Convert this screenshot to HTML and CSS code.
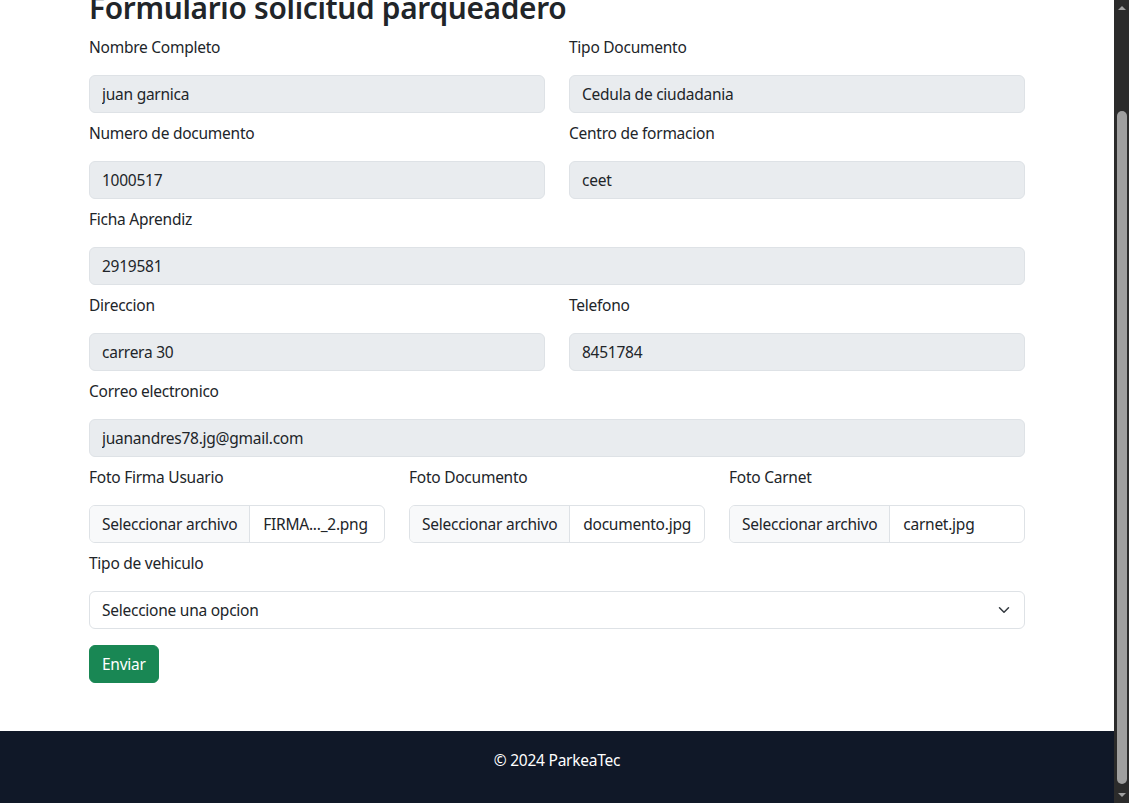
FILE: index.html
```html
<!DOCTYPE html>
<html lang="es">
<head>
<meta charset="utf-8">
<title>Formulario solicitud parqueadero</title>
<link rel="stylesheet" href="styles.css">
</head>
<body>
<div class="screen">
  <div class="page">
    <main class="container">
      <h2 class="title">Formulario solicitud parqueadero</h2>
      <form class="form">
        <div class="row row-2">
          <div class="field"><label class="label">Nombre Completo</label><input class="control" value="juan garnica" readonly></div>
          <div class="field"><label class="label">Tipo Documento</label><input class="control" value="Cedula de ciudadania" readonly></div>
        </div>
        <div class="row row-2">
          <div class="field"><label class="label">Numero de documento</label><input class="control" value="1000517" readonly></div>
          <div class="field"><label class="label">Centro de formacion</label><input class="control" value="ceet" readonly></div>
        </div>
        <div class="field"><label class="label">Ficha Aprendiz</label><input class="control" value="2919581" readonly></div>
        <div class="row row-2">
          <div class="field"><label class="label">Direccion</label><input class="control" value="carrera 30" readonly></div>
          <div class="field"><label class="label">Telefono</label><input class="control" value="8451784" readonly></div>
        </div>
        <div class="field"><label class="label">Correo electronico</label><input class="control" value="juanandres78.jg@gmail.com" readonly></div>
        <div class="row row-3">
          <div class="field"><label class="label">Foto Firma Usuario</label>
            <div class="file"><span class="file-btn">Seleccionar archivo</span><span class="file-name">FIRMA..._2.png</span></div>
          </div>
          <div class="field"><label class="label">Foto Documento</label>
            <div class="file"><span class="file-btn">Seleccionar archivo</span><span class="file-name">documento.jpg</span></div>
          </div>
          <div class="field"><label class="label">Foto Carnet</label>
            <div class="file"><span class="file-btn">Seleccionar archivo</span><span class="file-name">carnet.jpg</span></div>
          </div>
        </div>
        <div class="field field-last"><label class="label">Tipo de vehiculo</label>
          <div class="select"><span>Seleccione una opcion</span>
            <svg class="chevron" width="12" height="12" viewBox="0 0 16 16"><path d="M2 5l6 6 6-6" fill="none" stroke="#343a40" stroke-width="2" stroke-linecap="round" stroke-linejoin="round"/></svg>
          </div>
        </div>
        <button type="button" class="btn">Enviar</button>
      </form>
    </main>
    <footer class="footer">© 2024 ParkeaTec</footer>
  </div>
  <div class="scrollbar">
    <span class="arrow arrow-up"></span>
    <div class="track"><div class="thumb"></div></div>
    <span class="arrow arrow-down"></span>
  </div>
</div>
</body>
</html>
```

FILE: styles.css
```css
* { box-sizing: border-box; }
html, body { margin: 0; padding: 0; }
body {
  font-family: "Segoe UI", "Noto Sans", "Liberation Sans", sans-serif;
  font-size: 15.5px;
  letter-spacing: -0.25px;
  line-height: 24px;
  color: #212529;
  background: #fff;
  overflow: hidden;
}
.screen {
  display: flex;
  height: 803px;
  width: 1129px;
}
.page {
  flex: 1;
  height: 803px;
  overflow: hidden;
  display: flex;
  flex-direction: column;
  justify-content: flex-end;
}
.container {
  width: 960px;
  margin: 0 auto;
  padding: 0 12px 48px;
  flex-shrink: 0;
}
.title {
  font-size: 29.8px;
  letter-spacing: -0.3px;
  font-weight: 600;
  line-height: 38px;
  margin: 0 0 8px;
}
.form { display: flex; flex-direction: column; }
.row { display: grid; column-gap: 24px; }
.row-2 { grid-template-columns: 1fr 1fr; }
.row-3 { grid-template-columns: 1fr 1fr 1fr; }
.field {
  display: flex;
  flex-direction: column;
  gap: 16px;
  margin-bottom: 8px;
}
.field-last { margin-bottom: 16px; }
.label { display: block; height: 24px; }
.control {
  display: block;
  width: 100%;
  height: 38px;
  padding: 6px 12px;
  font: inherit;
  letter-spacing: inherit;
  color: #212529;
  background: #e9ecef;
  border: 1px solid #dee2e6;
  border-radius: 6px;
  outline: none;
}
.file {
  display: flex;
  align-items: center;
  height: 38px;
  border: 1px solid #dee2e6;
  border-radius: 6px;
  overflow: hidden;
  background: #fff;
}
.file-btn {
  height: 100%;
  display: flex;
  align-items: center;
  padding: 0 12px;
  background: #f8f9fa;
  border-right: 1px solid #dee2e6;
  white-space: nowrap;
}
.file-name { padding-left: 13px; white-space: nowrap; }
.select {
  display: flex;
  align-items: center;
  justify-content: space-between;
  height: 38px;
  padding: 0 12px;
  border: 1px solid #dee2e6;
  border-radius: 6px;
  background: #fff;
}
.chevron { display: block; margin-right: 2px; }
.btn {
  align-self: flex-start;
  height: 38px;
  padding: 0 12px;
  font: inherit;
  letter-spacing: inherit;
  color: #fff;
  background: #198754;
  border: 1px solid #198754;
  border-radius: 6px;
}
.footer {
  flex-shrink: 0;
  height: 72px;
  padding-top: 17px;
  background: #101828;
  color: #fff;
  text-align: center;
}
.scrollbar {
  width: 15px;
  height: 803px;
  background: #2b2b2b;
  display: flex;
  flex-direction: column;
  align-items: center;
}
.arrow {
  width: 0; height: 0;
  border-left: 4px solid transparent;
  border-right: 4px solid transparent;
  margin: 6px 0;
}
.arrow-up { border-bottom: 4px solid #a0a0a0; }
.arrow-down { border-top: 4px solid #a0a0a0; }
.track { flex: 1; width: 100%; display: flex; flex-direction: column; justify-content: flex-end; padding: 0 2px 3px 3px; }
.thumb { height: 673px; background: #9f9f9f; border-radius: 5px; }
```
